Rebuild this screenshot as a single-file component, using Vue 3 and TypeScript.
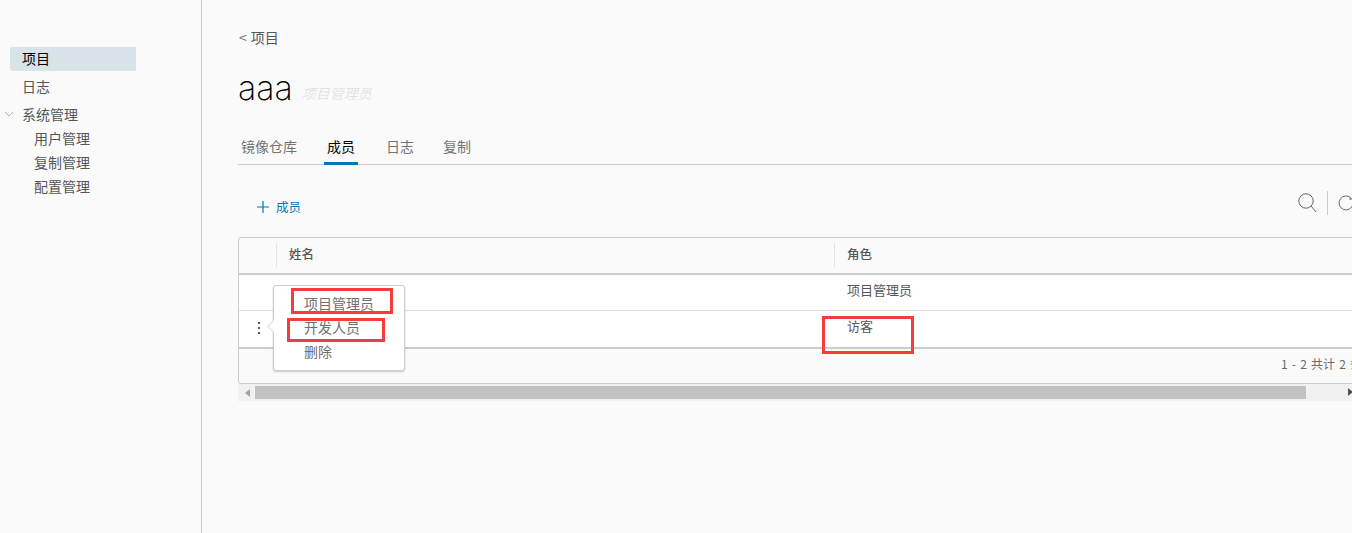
<script setup lang="ts">
const subMenu: string[] = ['用户管理', '复制管理', '配置管理']
const tabs = [
  { label: '镜像仓库', active: false },
  { label: '成员', active: true },
  { label: '日志', active: false },
  { label: '复制', active: false },
]
const rows = [
  { name: '', role: '项目管理员', actions: false },
  { name: '', role: '访客', actions: true },
]
</script>

<template>
  <div class="page">
    <aside class="sidebar">
      <a class="nav-item active">项目</a>
      <a class="nav-item log">日志</a>
      <div class="nav-group">
        <svg class="chev" width="10" height="6" viewBox="0 0 10 6"><path d="M1 1l4 4 4-4" fill="none" stroke="#b5b5b5" stroke-width="1" /></svg>
        <span>系统管理</span>
      </div>
      <a v-for="s in subMenu" :key="s" class="sub-item">{{ s }}</a>
    </aside>
    <main class="content">
      <div class="crumb"><span class="lt">&lt;</span>项目</div>
      <div class="title-row">
        <h1>aaa</h1>
        <span class="role-tag">项目管理员</span>
      </div>
      <nav class="tabs">
        <span v-for="t in tabs" :key="t.label" class="tab" :class="{ on: t.active }">{{ t.label }}</span>
      </nav>
      <div class="toolbar">
        <button class="add">
          <svg width="12" height="12" viewBox="0 0 12 12"><path d="M6 0v12M0 6h12" stroke="#0079b8" stroke-width="1.2" /></svg>
          <span class="add-label">成员</span>
        </button>
        <div class="tools">
          <svg width="20" height="20" viewBox="0 0 20 20"><circle cx="9" cy="8" r="7.2" fill="none" stroke="#666" stroke-width="1" /><path d="M14.2 13.2L19 19" stroke="#666" stroke-width="1" /></svg>
          <i class="sep"></i>
          <svg width="20" height="20" viewBox="0 0 20 20"><path d="M13.5 5.5A7 7 0 1 0 15 11" fill="none" stroke="#666" stroke-width="1" /><path d="M15 2v4h-4" fill="none" stroke="#666" stroke-width="1" /></svg>
        </div>
      </div>
      <section class="grid">
        <div class="row head">
          <div class="c c0"></div>
          <div class="c c1"><span>姓名</span></div>
          <div class="c c2"><span>角色</span></div>
        </div>
        <div v-for="(r, i) in rows" :key="i" class="row body" :class="{ last: i === rows.length - 1 }">
          <div class="c c0">
            <span v-if="r.actions" class="dots"><b></b><b></b><b></b></span>
          </div>
          <div class="c c1">{{ r.name }}</div>
          <div class="c c2">{{ r.role }}</div>
        </div>
        <div class="foot">1 - 2 共计 2 条记录</div>
        <div class="menu">
          <i class="arrow"></i>
          <div>项目管理员</div>
          <div>开发人员</div>
          <div>删除</div>
        </div>
      </section>
      <div class="scrollbar">
        <i class="sl"></i>
        <div class="thumb"></div>
        <i class="sr"></i>
      </div>
      <i class="mark m1"></i>
      <i class="mark m2"></i>
      <i class="mark m3"></i>
    </main>
  </div>
</template>

<style scoped>
.page {
  display: flex;
  width: 1352px;
  height: 533px;
  overflow: hidden;
  background: #fafafa;
  color: #565656;
  font-family: "Noto Sans CJK SC", "Liberation Sans", sans-serif;
  font-size: 14px;
  position: relative;
}
.sidebar {
  flex: 0 0 202px;
  box-sizing: border-box;
  border-right: 1px solid #ccc;
  padding-top: 47px;
  padding-left: 10px;
}
.nav-item {
  display: block;
  width: 126px;
  height: 24px;
  line-height: 22px;
  padding-left: 12px;
  box-sizing: border-box;
  border-radius: 2px 0 0 2px;
  color: #565656;
}
.nav-item.active {
  background: #d9e4ea;
  color: #000;
}
.nav-item.log {
  margin-top: 4px;
}
.nav-group {
  display: flex;
  align-items: center;
  height: 22px;
  margin-top: 4px;
  margin-left: -6px;
  margin-bottom: 2px;
}
.chev {
  margin-right: 8px;
}
.sub-item {
  display: block;
  height: 24px;
  line-height: 22px;
  padding-left: 24px;
  color: #565656;
}
.content {
  position: relative;
  flex: 0 0 auto;
  width: 1200px;
  padding: 0 0 0 36px;
  box-sizing: border-box;
}
.crumb {
  margin-top: 27px;
  height: 21px;
  line-height: 21px;
  font-size: 14px;
}
.lt {
  display: inline-block;
  margin: 0 4px 0 1px;
  color: #6f6f6f;
}
.title-row {
  display: flex;
  align-items: flex-start;
  margin-top: 17px;
  height: 46px;
}
h1 {
  margin: 0;
  font-family: "Inter", "Liberation Sans", sans-serif;
  font-weight: 200;
  font-size: 34px;
  line-height: 45px;
  color: #000;
}
.role-tag {
  margin: 18px 0 0 9px;
  line-height: 20px;
  font-size: 14px;
  font-weight: 300;
  font-style: italic;
  color: #dcdcdc;
}
.tabs {
  display: flex;
  margin-top: 13px;
  height: 40px;
  width: 1200px;
  border-bottom: 1px solid #ccc;
}
.tab {
  padding: 0 3px;
  margin-right: 24px;
  height: 41px;
  line-height: 44px;
  box-sizing: border-box;
  color: #737373;
}
.tab:nth-child(2) {
  margin-right: 25px;
}
.tab:nth-child(3) {
  margin-right: 23px;
}
.tab.on {
  color: #000;
  border-bottom: 3px solid #0079b8;
}
.toolbar {
  display: flex;
  justify-content: space-between;
  align-items: center;
  height: 36px;
  margin-top: 24px;
  width: 1120px;
}
.add {
  display: flex;
  align-items: center;
  gap: 7px;
  border: 0;
  background: none;
  padding: 0 0 0 19px;
  color: #0079b8;
  font: inherit;
  font-size: 12.5px;
}
.add-label {
  margin-bottom: 2px;
}
.tools {
  display: flex;
  align-items: center;
  gap: 10px;
  margin-bottom: 8px;
}
.sep {
  width: 1px;
  height: 24px;
  background: #ccc;
}
.grid {
  position: relative;
  margin-top: 12px;
  width: 1200px;
  height: 147px;
  box-sizing: border-box;
  border: 1px solid #ccc;
  border-radius: 3px;
}
.row {
  display: flex;
}
.head {
  height: 35px;
  border-bottom: 2px solid #ccc;
  font-weight: 500;
  font-size: 12.5px;
  color: #565656;
}
.head .c {
  align-items: center;
  display: flex;
  box-sizing: border-box;
  height: 35px;
  padding-bottom: 4px;
}
.head .c1,
.head .c2 {
  position: relative;
}
.head .c1::before,
.head .c2::before {
  content: "";
  position: absolute;
  left: 0;
  top: 5px;
  height: 25px;
  width: 1px;
  background: #e4e4e4;
}
.body {
  height: 35px;
  background: #fff;
  border-bottom: 1px solid #e0e0e0;
  font-size: 13px;
}
.body.last {
  height: 36px;
  border-bottom: 2px solid #ccc;
}
.body .c {
  padding-top: 5px;
  line-height: 20px;
}
.c0 {
  flex: 0 0 37px;
  position: relative;
}
.c1 {
  flex: 0 0 558px;
  padding-left: 13px;
  box-sizing: border-box;
}
.c2 {
  flex: 1;
  padding-left: 13px;
}
.dots {
  position: absolute;
  left: 19px;
  top: 11px;
  display: flex;
  flex-direction: column;
  gap: 3px;
}
.dots b {
  width: 2px;
  height: 2px;
  background: #565656;
}
.foot {
  height: 34px;
  line-height: 30px;
  padding-left: 1042px;
  font-size: 12px;
  word-spacing: 1.5px;
  color: #6a6a6a;
  white-space: nowrap;
}
.menu {
  position: absolute;
  left: 34px;
  top: 47px;
  width: 132px;
  height: 86px;
  box-sizing: border-box;
  background: #fff;
  border: 1px solid #ccc;
  border-radius: 3px;
  box-shadow: 0 1px 2px rgba(0, 0, 0, .2);
  padding: 5px 0 0 30px;
  line-height: 24px;
  color: #6f6f6f;
  z-index: 2;
}
.arrow {
  position: absolute;
  left: -5px;
  top: 36px;
  width: 8px;
  height: 8px;
  background: #fff;
  border-left: 1px solid #ddd;
  border-bottom: 1px solid #ddd;
  transform: rotate(45deg);
}
.scrollbar {
  position: relative;
  width: 1200px;
  height: 17px;
  background: #f1f1f1;
}
.thumb {
  position: absolute;
  left: 17px;
  top: 2px;
  width: 1051px;
  height: 13px;
  background: #c1c1c1;
}
.sl {
  position: absolute;
  left: 7px;
  top: 5px;
  border: 4px solid transparent;
  border-left: 0;
  border-right: 5px solid #a3a3a3;
}
.sr {
  position: absolute;
  left: 1110px;
  top: 4px;
  border: 4px solid transparent;
  border-right: 0;
  border-left: 5px solid #505050;
}
.mark {
  position: absolute;
  border: 3px solid #f73c3c;
  box-sizing: border-box;
  z-index: 3;
}
.m1 {
  left: 89px;
  top: 288px;
  width: 102px;
  height: 26px;
}
.m2 {
  left: 85px;
  top: 318px;
  width: 98px;
  height: 24px;
}
.m3 {
  left: 620px;
  top: 316px;
  width: 92px;
  height: 38px;
}
</style>
<style>
html, body { margin: 0; overflow: hidden; background: #fafafa; }
</style>
